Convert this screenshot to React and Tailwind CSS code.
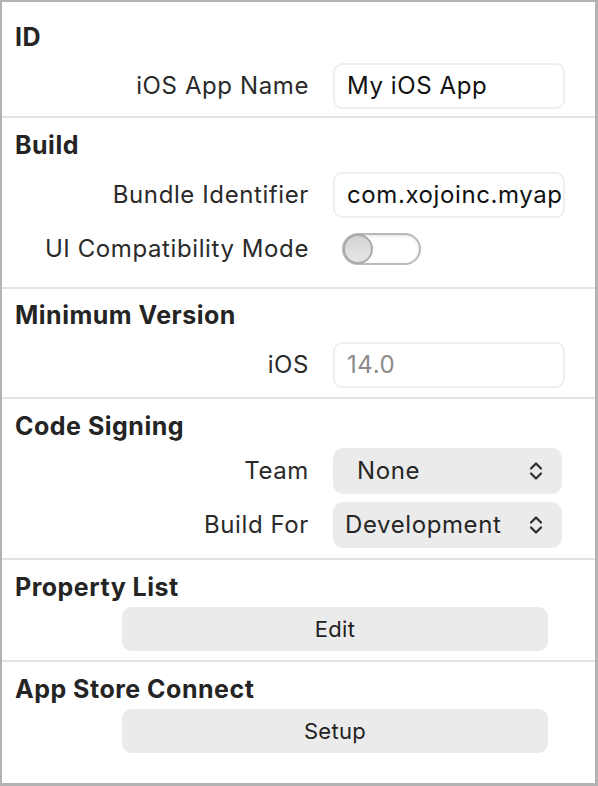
import { useState } from "react";

const font = { fontFamily: '"Inter", "Liberation Sans", sans-serif' };

function SectionTitle({ children }) {
  return (
    <div className="h-[30px] pl-[13px] text-[25px] leading-[30px] font-bold tracking-[0.5px] text-[#242424]">
      {children}
    </div>
  );
}

function Row({ label, children, className = "" }) {
  return (
    <div className={`flex h-[46px] items-center ${className}`}>
      <div className="w-[307px] whitespace-nowrap text-right text-[24px] tracking-[0.6px] text-[#2a2a2a]">{label}</div>
      <div className="ml-[24px] flex items-center">{children}</div>
    </div>
  );
}

// the bundle id is longer than the field, so its tail is clipped
function TextField({ value, placeholder }) {
  return (
    <div className="flex h-[46px] w-[232px] items-center rounded-[9px] border-2 border-[#efefef] bg-white pl-[12px] pr-[1px] text-[24px] tracking-[0.6px]">
      <div className="flex-1 overflow-hidden whitespace-nowrap">
        {value ? (
          <span className="text-[#111]">{value}</span>
        ) : (
          <span className="text-[#8c8c8c]">{placeholder}</span>
        )}
      </div>
    </div>
  );
}

function UpDown() {
  return (
    <svg width="16" height="22" viewBox="0 0 16 22" fill="none" stroke="#2e2e2e" strokeWidth="2.2" strokeLinecap="round" strokeLinejoin="round">
      <path d="M3 8.5 8 3.5l5 5" />
      <path d="M3 13.5l5 5 5-5" />
    </svg>
  );
}

function PopupMenu({ value, indent = 12 }) {
  return (
    <div className="flex h-[46px] w-[229px] items-center justify-between rounded-[10px] bg-[#ebebeb] pr-[18px] text-[24px] tracking-[0.6px] text-[#262626]">
      <span style={{ paddingLeft: indent }}>{value}</span>
      <UpDown />
    </div>
  );
}

function Toggle({ on, onChange }) {
  return (
    <button
      onClick={() => onChange(!on)}
      className="ml-[9px] flex h-[32px] w-[79px] items-center rounded-full border-2 border-[#b9b9b9] bg-white shadow-[inset_0_1px_3px_rgba(0,0,0,0.12)]"
    >
      <span className="h-[30px] w-[30px] -ml-[1px] rounded-full border-2 border-[#a9a9a9] bg-gradient-to-b from-[#d4d4d4] to-[#e6e6e6]" />
    </button>
  );
}

function WideButton({ children }) {
  return (
    <div className="ml-[120px] mt-[5px] flex h-[44px] w-[426px] items-center justify-center rounded-[9px] bg-[#ebebeb] text-[22px] tracking-[0.3px] text-[#222]">
      {children}
    </div>
  );
}

const Divider = () => <div className="h-[2px] bg-[#e3e3e3]" />;

export default function App() {
  const [compat, setCompat] = useState(false);

  return (
    <div
      style={font}
      className="h-[786px] w-[598px] overflow-hidden border-b-[3px] border-l-2 border-r-[3px] border-t-2 border-[#b3b3b3] bg-white"
    >
      <section className="pb-[7px] pt-[20px]">
        <SectionTitle>ID</SectionTitle>
        <Row label="iOS App Name" className="mt-[11px]">
          <TextField value="My iOS App" />
        </Row>
      </section>
      <Divider />

      <section className="pb-[15px] pt-[12px]">
        <SectionTitle>Build</SectionTitle>
        <Row label="Bundle Identifier" className="mt-[12px]">
          <TextField value="com.xojoinc.myapp" />
        </Row>
        <Row label="UI Compatibility Mode" className="mt-[8px]">
          <Toggle on={compat} onChange={setCompat} />
        </Row>
      </section>
      <Divider />

      <section className="pb-[9px] pt-[11px]">
        <SectionTitle>Minimum Version</SectionTitle>
        <Row label="iOS" className="mt-[12px]">
          <TextField placeholder="14.0" />
        </Row>
      </section>
      <Divider />

      <section className="pb-[10px] pt-[12px]">
        <SectionTitle>Code Signing</SectionTitle>
        <Row label="Team" className="mt-[7px]">
          <PopupMenu value="None" indent={24} />
        </Row>
        <Row label="Build For" className="mt-[8px]">
          <PopupMenu value="Development" />
        </Row>
      </section>
      <Divider />

      <section className="pb-[9px] pt-[12px]">
        <SectionTitle>Property List</SectionTitle>
        <WideButton>Edit</WideButton>
      </section>
      <Divider />

      <section className="pt-[12px]">
        <SectionTitle>App Store Connect</SectionTitle>
        <WideButton>Setup</WideButton>
      </section>
    </div>
  );
}
